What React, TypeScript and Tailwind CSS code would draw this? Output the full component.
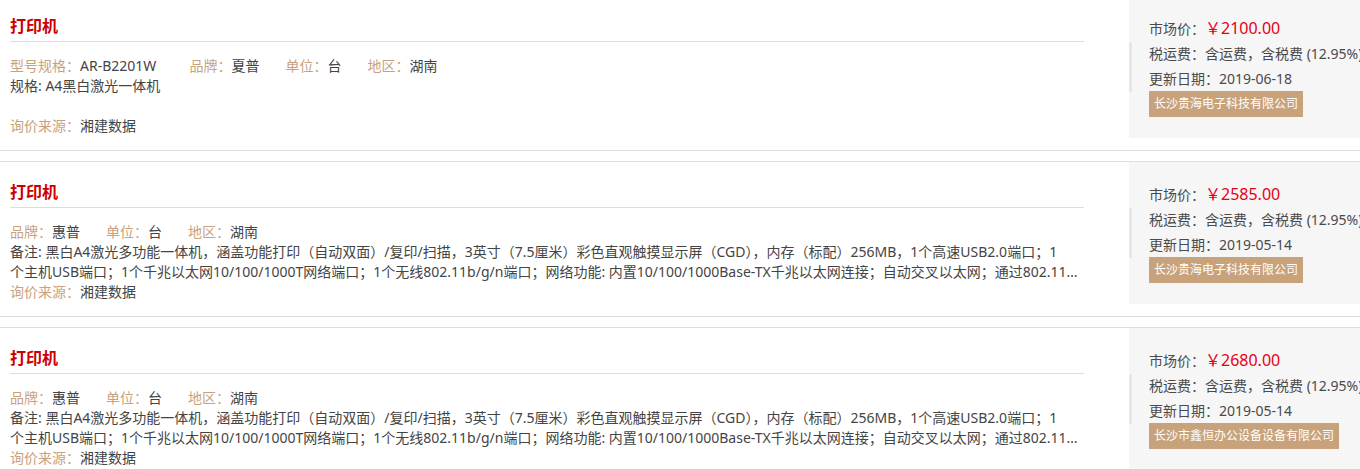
import React from 'react';

interface Quote {
  id: number;
  title: string;
  fields: { label: string; value: string }[];
  desc: string[];
  source: string;
  price: string;
  tax: string;
  date: string;
  company: string;
}

const longDesc = [
  '备注: 黑白A4激光多功能一体机，涵盖功能打印（自动双面）/复印/扫描，3英寸（7.5厘米）彩色直观触摸显示屏（CGD），内存（标配）256MB，1个高速USB2.0端口；1',
  '个主机USB端口；1个千兆以太网10/100/1000T网络端口；1个无线802.11b/g/n端口；网络功能: 内置10/100/1000Base-TX千兆以太网连接；自动交叉以太网；通过802.11b/g/n进行无线连接',
];

const quotes: Quote[] = [
  {
    id: 1,
    title: '打印机',
    fields: [
      { label: '型号规格：', value: 'AR-B2201W  ' },
      { label: '品牌：', value: '夏普' },
      { label: '单位：', value: '台' },
      { label: '地区：', value: '湖南' },
    ],
    desc: ['规格: A4黑白激光一体机'],
    source: '湘建数据',
    price: '2100.00',
    tax: '含运费，含税费 (12.95%)',
    date: '2019-06-18',
    company: '长沙贵海电子科技有限公司',
  },
  {
    id: 2,
    title: '打印机',
    fields: [
      { label: '品牌：', value: '惠普' },
      { label: '单位：', value: '台' },
      { label: '地区：', value: '湖南' },
    ],
    desc: longDesc,
    source: '湘建数据',
    price: '2585.00',
    tax: '含运费，含税费 (12.95%)',
    date: '2019-05-14',
    company: '长沙贵海电子科技有限公司',
  },
  {
    id: 3,
    title: '打印机',
    fields: [
      { label: '品牌：', value: '惠普' },
      { label: '单位：', value: '台' },
      { label: '地区：', value: '湖南' },
    ],
    desc: longDesc,
    source: '湘建数据',
    price: '2680.00',
    tax: '含运费，含税费 (12.95%)',
    date: '2019-05-14',
    company: '长沙市鑫恒办公设备设备有限公司',
  },
];

function QuoteItem({ q }: { q: Quote }) {
  return (
    <div className="mb-[10px] border-y border-[#dddddd]">
      <div className="flex h-[154px]">
        {/* 左侧信息 */}
        <div className="w-[1084px] shrink-0 pl-[10px]">
          <div className="border-b border-[#dddddd] pt-[18px] pb-[3px] text-[16px] leading-[24px] font-bold text-[#cc0000]">
            {q.title}
          </div>
          <div className="mt-[14px] text-[14px] leading-[20px] text-[#444]">
            <div className="whitespace-nowrap">
              {q.fields.map((f) => (
                <span key={f.label} className="mr-[26px]">
                  <span className="text-[#c8a27e]">{f.label}</span>
                  <span className="whitespace-pre">{f.value}</span>
                </span>
              ))}
            </div>
            <div className="h-[40px]">
              {q.desc.map((line, i) => (
                <div
                  key={i}
                  className={i === q.desc.length - 1 && i > 0 ? 'truncate' : 'whitespace-nowrap'}
                >
                  {line}
                </div>
              ))}
            </div>
            <div>
              <span className="text-[#c8a27e]">询价来源：</span>
              {q.source}
            </div>
          </div>
        </div>

        {/* 右侧价格 */}
        <div className="ml-[45px] flex h-[142px] w-[260px] shrink-0 bg-[#f6f6f6]">
          <div className="mt-[46px] h-[50px] w-[3px] shrink-0 rounded-sm bg-[#e6e6e6]" />
          <div className="pl-[17px] pt-[20px] text-[14px] leading-[25px] text-[#4a4a4a] whitespace-nowrap">
            <div>
              市场价：<span className="text-[16px] text-[#e60012]">￥{q.price}</span>
            </div>
            <div>税运费：{q.tax}</div>
            <div>更新日期：{q.date}</div>
            <div className="w-fit bg-[#c8a27a] px-[5px] text-[12px] leading-[26px] text-white">
              {q.company}
            </div>
          </div>
        </div>
      </div>
    </div>
  );
}

export default function App() {
  return (
    <div className="h-[469px] w-[1360px] overflow-hidden bg-white font-['Noto_Sans','Noto_Sans_CJK_SC',sans-serif]">
      <div className="-mt-[5px]">
        {quotes.map((q) => (
          <QuoteItem key={q.id} q={q} />
        ))}
      </div>
    </div>
  );
}
